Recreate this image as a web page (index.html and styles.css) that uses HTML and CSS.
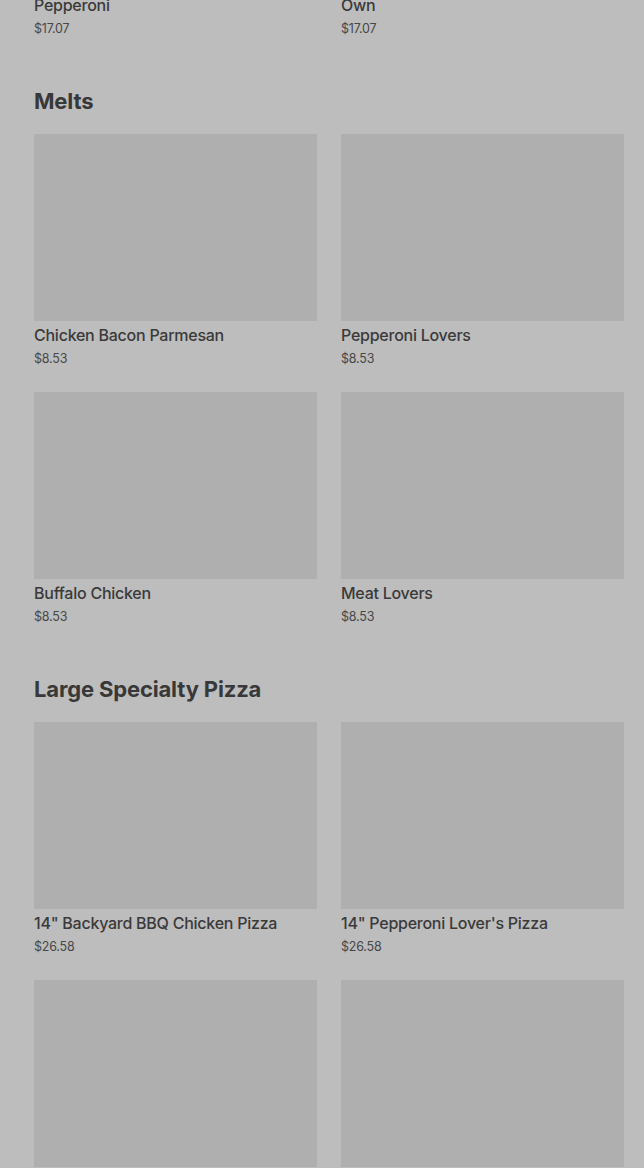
FILE: index.html
```html
<!DOCTYPE html>
<html lang="en">
<head>
  <meta charset="UTF-8">
  <title>Menu</title>
  <meta name="viewport" content="width=device-width, initial-scale=1.0">
  <link rel="stylesheet" href="styles.css">
</head>
<body>
  <main class="menu">
    <section class="category category-cut">
      <div class="grid">
        <div class="item">
          <div class="thumb"></div>
          <div class="name">Pepperoni</div>
          <div class="price">$17.07</div>
        </div>
        <div class="item">
          <div class="thumb"></div>
          <div class="name">Own</div>
          <div class="price">$17.07</div>
        </div>
      </div>
    </section>

    <section class="category">
      <h2>Melts</h2>
      <div class="grid">
        <div class="item">
          <div class="thumb"></div>
          <div class="name">Chicken Bacon Parmesan</div>
          <div class="price">$8.53</div>
        </div>
        <div class="item">
          <div class="thumb"></div>
          <div class="name">Pepperoni Lovers</div>
          <div class="price">$8.53</div>
        </div>
        <div class="item">
          <div class="thumb"></div>
          <div class="name">Buffalo Chicken</div>
          <div class="price">$8.53</div>
        </div>
        <div class="item">
          <div class="thumb"></div>
          <div class="name">Meat Lovers</div>
          <div class="price">$8.53</div>
        </div>
      </div>
    </section>

    <section class="category">
      <h2>Large Specialty Pizza</h2>
      <div class="grid">
        <div class="item">
          <div class="thumb"></div>
          <div class="name">14" Backyard BBQ Chicken Pizza</div>
          <div class="price">$26.58</div>
        </div>
        <div class="item">
          <div class="thumb"></div>
          <div class="name">14" Pepperoni Lover's Pizza</div>
          <div class="price">$26.58</div>
        </div>
        <div class="item">
          <div class="thumb"></div>
        </div>
        <div class="item">
          <div class="thumb"></div>
        </div>
      </div>
    </section>
  </main>
</body>
</html>
```

FILE: styles.css
```css
body {
  margin: 0;
  font-family: Inter, "Noto Sans", sans-serif;
  background-color: #bdbdbd;
  color: #3a3a3a;
  height: 1168px;
  overflow: hidden;
}
.menu {
  width: 590px;
  padding: 0 20px 0 34px;
  margin-top: -196px;
}
.category {
  margin-bottom: 46px;
}
h2 {
  margin: 0 0 17px;
  font-size: 22px;
  line-height: 32px;
  font-weight: 700;
  letter-spacing: -0.15px;
  color: #383838;
}
.grid {
  display: grid;
  grid-template-columns: 283px 283px;
  column-gap: 24px;
  row-gap: 23px;
}
.thumb {
  height: 187px;
  background-color: #afafaf;
}
.name {
  margin-top: 4px;
  font-size: 16px;
  line-height: 20px;
  font-weight: 500;
  letter-spacing: -0.25px;
  color: #3a3a3a;
}
.price {
  margin-top: 4px;
  font-size: 12.5px;
  line-height: 20px;
  letter-spacing: -0.2px;
  color: #474747;
}
```
